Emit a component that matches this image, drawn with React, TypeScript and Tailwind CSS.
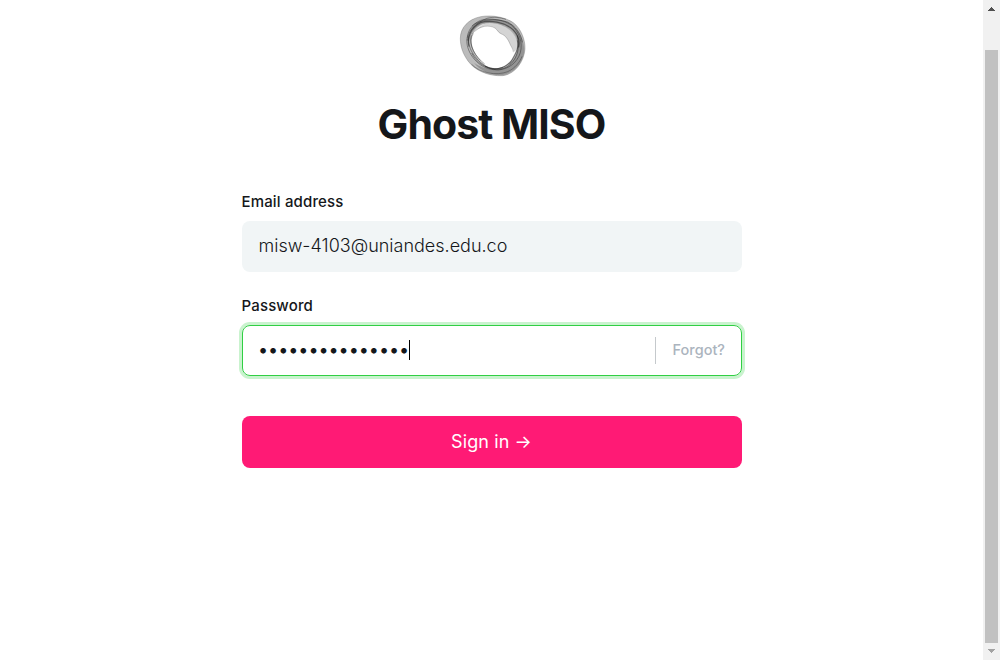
function RingLogo() {
  return (
    <svg className="ml-px h-20 w-[85px] shrink-0" viewBox="0 0 255 240" fill="none" aria-hidden="true">
      <path
        fillRule="evenodd"
        fill="#777"
        fillOpacity=".5"
        d="M31 100C31 68 55 42 92 35C125 29 165 36 190 53C212 70 226 102 225 132C222 170 195 208 158 212C115 214 75 197 54 168C38 145 31 125 31 100ZM64 104C61 134 86 172 114 186C139 194 165 189 181 170C201 148 208 122 196 96C183 71 153 55 119 54C88 55 68 76 64 104Z"
      />
      <path
        fillRule="evenodd"
        fill="#555"
        fillOpacity=".38"
        d="M70 63C89 38 159 38 190 62C212 83 225 112 222 143C215 178 190 205 158 210C126 212 90 198 72 173C97 191 140 204 174 183C203 157 212 119 195 88C175 57 123 48 94 57C74 67 59 87 57 111C52 92 58 76 70 63Z"
      />
      <path
        fill="#aaa"
        fillOpacity=".5"
        d="M73 82C90 53 127 46 163 58C192 72 209 98 204 121C202 132 197 139 191 141C188 131 182 125 178 115C172 99 161 88 150 86C141 79 139 70 127 66C108 61 93 65 73 82Z"
      />
      <g stroke="#1c1c1c" strokeOpacity=".55" strokeWidth="2.3">
        <path d="M31 100C31 68 55 42 92 35C125 29 165 36 190 53C212 70 226 102 225 132C222 170 195 208 158 212C115 214 75 197 54 168C38 145 31 125 31 100Z" strokeOpacity=".3" />
        <path d="M52 107C49 82 66 56 92 46C121 38 161 44 184 60C208 81 219 113 211 143C201 173 177 192 145 195C110 193 78 173 65 144" />
        <path d="M57 125C50 96 63 67 91 53C119 44 164 51 189 74C205 91 211 109 206 127" strokeWidth="3.5" />
        <path d="M66 63C88 43 137 39 172 51C197 63 213 86 217 112" strokeOpacity=".6" />
        <path d="M51 102C47 136 75 176 111 190C135 198 164 195 183 176C200 159 210 131 202 106" />
        <path d="M57 91C49 126 75 164 108 184C126 192 143 193 159 188" />
        <path d="M64 91C55 119 77 157 104 177" />
        <path d="M70 85C54 111 69 145 91 166" strokeOpacity=".4" />
        <path d="M202 92C211 126 196 147 184 168C162 193 130 198 105 184" strokeWidth="3.5" />
        <path d="M66 87C84 64 109 60 128 66C141 69 142 80 153 86C170 92 177 109 182 121C187 129 189 136 190 142" strokeOpacity=".2" />
        <path d="M65 178C92 205 139 213 173 200C195 190 210 171 216 154" strokeOpacity=".45" />
        <path d="M51 101C59 70 81 52 111 40C132 34 151 38 168 43" strokeOpacity=".5" />
      </g>
    </svg>
  );
}

function Scrollbar() {
  return (
    <aside className="flex w-[17px] shrink-0 flex-col items-center bg-[#f1f1f1]" aria-hidden="true">
      <svg className="h-[17px] w-[17px] shrink-0" viewBox="0 0 17 17" shapeRendering="crispEdges">
        <path d="M8 7h1v1h1v1h1v1h1v1H5v-1h1V9h1V8h1z" fill="#505050" />
      </svg>
      <div className="mt-[33px] h-[593px] w-[13px] shrink-0 bg-[#c1c1c1]" />
      <svg className="h-[17px] w-[17px] shrink-0" viewBox="0 0 17 17" shapeRendering="crispEdges">
        <path d="M5 6h7v1h-1v1h-1v1H9v1H8V9H7V8H6V7H5z" fill="#a3a3a3" />
      </svg>
    </aside>
  );
}

export default function App() {
  return (
    <div className="flex h-[660px] w-[1000px] overflow-hidden bg-white font-['Inter',sans-serif] text-[#15171a]">
      <main className="flex flex-1 flex-col items-center pt-[5px]">
        <RingLogo />
        <h1 className="mt-3.5 text-[41px] leading-[50px] font-bold tracking-[-0.95px] whitespace-nowrap">Ghost MISO</h1>
        <form className="mt-[43px] ml-px flex w-[500px] flex-col" onSubmit={(event) => event.preventDefault()}>
          <div className="-ml-[0.5px] h-5 text-[15px] leading-5 font-medium tracking-[0.16px]">Email address</div>
          <div className="mt-[9px] flex h-[51px] items-center rounded-lg bg-[#f1f5f6] px-[16.5px] pb-0.5 text-[18px] font-light">
            misw-4103@uniandes.edu.co
          </div>
          <div className="mt-6 -ml-[0.5px] h-5 text-[15px] leading-5 font-medium tracking-[0.16px]">Password</div>
          <div className="mt-[9px] flex h-[51px] items-center rounded-lg border border-[#30cf43] pr-4 pl-[15px] shadow-[0_0_0_3px_#c9f3ce]">
            <span className="pb-0.5 text-[18px] leading-5 tracking-[-0.05px]">•••••••••••••••</span>
            <span className="mb-0.5 h-5 w-px bg-black" />
            <span className="ml-auto h-[27px] w-px bg-[#c5c9cc]" />
            <span className="ml-[16.5px] pb-0.5 text-[14.5px] font-medium text-[#abb4be]">Forgot?</span>
          </div>
          <button className="mt-10 flex h-[52px] items-center justify-center rounded-lg bg-[#ff1a75] pr-px pb-0.5 text-[18px] tracking-[0.1px] text-white">
            Sign in →
          </button>
        </form>
      </main>
      <Scrollbar />
    </div>
  );
}
